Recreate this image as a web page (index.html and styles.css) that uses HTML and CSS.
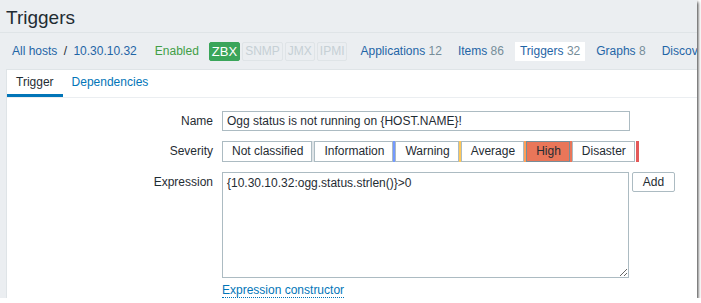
FILE: index.html
```html
<!DOCTYPE html>
<html lang="en">
<head>
    <meta charset="UTF-8">
    <title>Triggers</title>
    <link rel="stylesheet" href="styles.css">
</head>
<body>
    <div class="frame">
        <header class="header-title">
            <h1>Triggers</h1>
        </header>

        <nav class="host-nav">
            <div class="breadcrumbs">
                <a href="#">All hosts</a>
                <span class="sep">/</span>
                <a href="#">10.30.10.32</a>
            </div>
            <span class="status-green">Enabled</span>
            <div class="status-group">
                <span class="badge badge-on">ZBX</span>
                <span class="badge">SNMP</span>
                <span class="badge">JMX</span>
                <span class="badge">IPMI</span>
            </div>
            <ul class="object-links">
                <li><a href="#">Applications</a> <span class="count">12</span></li>
                <li><a href="#">Items</a> <span class="count">86</span></li>
                <li class="selected"><a href="#">Triggers</a> <span class="count">32</span></li>
                <li><a href="#">Graphs</a> <span class="count">8</span></li>
                <li><a href="#">Discovery rules</a> <span class="count">1</span></li>
            </ul>
        </nav>

        <div class="table-forms">
            <ul class="tabs">
                <li class="tab active">Trigger</li>
                <li class="tab"><a href="#">Dependencies</a></li>
            </ul>

            <div class="form-grid">
                <label class="form-label">Name</label>
                <div class="form-field">
                    <input type="text" class="input-name" value="Ogg status is not running on {HOST.NAME}!">
                </div>

                <label class="form-label">Severity</label>
                <div class="form-field">
                    <ul class="radio-segmented">
                        <li class="sev-na"><label>Not classified</label></li>
                        <li class="sev-info"><label>Information</label></li>
                        <li class="sev-warning"><label>Warning</label></li>
                        <li class="sev-average"><label>Average</label></li>
                        <li class="sev-high checked"><label>High</label></li>
                        <li class="sev-disaster"><label>Disaster</label></li>
                    </ul>
                </div>

                <label class="form-label">Expression</label>
                <div class="form-field expression-field">
                    <textarea class="input-expression">{10.30.10.32:ogg.status.strlen()}>0</textarea>
                    <button class="btn-grey">Add</button>
                </div>

                <div></div>
                <div class="form-field">
                    <a href="#" class="link-action">Expression constructor</a>
                </div>
            </div>
        </div>
    </div>
</body>
</html>
```

FILE: styles.css
```css
body {
    margin: 0;
    padding: 0;
    background-color: #ffffff;
    font-family: "Liberation Sans", Arial, sans-serif;
    font-size: 12px;
    color: #1f2c33;
}

a {
    color: #1f65a6;
    text-decoration: none;
}

.frame {
    width: 697px;
    height: 298px;
    background-color: #ebeef1;
    overflow: hidden;
    box-shadow: 1px 2px 3px rgba(0, 0, 0, 0.8);
}

.header-title {
    height: 33px;
    padding: 0 6px;
    border-bottom: 1px solid #dfe4e7;
    box-sizing: border-box;
}

.header-title h1 {
    margin: 0;
    padding-top: 6px;
    font-size: 19px;
    line-height: 24px;
    font-weight: normal;
}

.host-nav {
    display: flex;
    align-items: center;
    height: 36px;
    padding-left: 12px;
    white-space: nowrap;
}

.breadcrumbs .sep {
    margin: 0 3px;
    color: #1f2c33;
}

.status-green {
    margin-left: 18px;
    color: #429e47;
}

.status-group {
    display: flex;
    margin-left: 10px;
}

.badge {
    padding: 0 2px;
    margin-right: 2px;
    line-height: 17px;
    border: 1px solid #dfe4e7;
    border-radius: 2px;
    color: #c6d0d5;
}

.badge-on {
    background-color: #3aa55a;
    border-color: #3aa55a;
    color: #ffffff;
    font-size: 13px;
}

.object-links {
    display: flex;
    list-style: none;
    margin: 0 0 0 6px;
    padding: 0;
}

.object-links li {
    padding: 0 5px;
    margin-right: 6px;
    line-height: 19px;
}

.object-links li.selected {
    background-color: #ffffff;
}

.count {
    color: #768d99;
}

.table-forms {
    margin-left: 6px;
    height: 228px;
    background-color: #ffffff;
    border-top: 1px solid #dfe4e7;
    border-left: 1px solid #dfe4e7;
}

.tabs {
    display: flex;
    list-style: none;
    margin: 0;
    padding: 0;
    height: 27px;
    border-bottom: 1px solid #ebeef1;
}

.tab {
    padding: 0 9px;
    line-height: 25px;
    border-bottom: 3px solid transparent;
}

.tab.active {
    border-bottom-color: #0275b8;
}

.tab a {
    color: #0275b8;
}

.form-grid {
    display: grid;
    grid-template-columns: 206px 1fr;
    column-gap: 9px;
    row-gap: 10px;
    padding-top: 13px;
}

.form-label {
    text-align: right;
    line-height: 20px;
}

.form-field {
    display: flex;
    align-items: flex-start;
}

input,
textarea,
button {
    font-family: "Liberation Sans", Arial, sans-serif;
    font-size: 12px;
    color: #1f2c33;
}

.input-name {
    width: 408px;
    height: 20px;
    margin: 0;
    padding: 0 4px;
    border: 1px solid #acbbc2;
    box-sizing: border-box;
}

.radio-segmented {
    display: flex;
    list-style: none;
    margin: 0;
    padding: 0;
}

.radio-segmented li {
    display: flex;
}

.radio-segmented li::after {
    content: '';
    width: 2px;
    background-color: var(--sev);
}

.radio-segmented label {
    padding: 0 8px 0 9px;
    line-height: 19px;
    border: 1px solid #acbbc2;
    background-color: #ffffff;
}

.radio-segmented .checked label {
    background-color: #e97659;
    border-color: #768d99;
}

.sev-na { --sev: #dfe4e7; }
.sev-info { --sev: #7499ff; }
.sev-warning { --sev: #ffc859; }
.sev-average { --sev: #ffa059; }
.sev-high { --sev: #e97659; }
.sev-disaster { --sev: #e45959; }

.radio-segmented .sev-disaster::after {
    width: 3px;
    margin-left: 1px;
}

.input-expression {
    width: 407px;
    height: 106px;
    margin: 0;
    padding: 3px 4px;
    border: 1px solid #acbbc2;
    box-sizing: border-box;
    resize: both;
}

.btn-grey {
    margin-left: 3px;
    width: 43px;
    height: 20px;
    padding: 0;
    background-color: #ffffff;
    border: 1px solid #acbbc2;
    border-radius: 2px;
}

.link-action {
    margin-top: -4px;
    color: #0275b8;
    border-bottom: 1px dotted #0275b8;
    line-height: 13px;
}
```
